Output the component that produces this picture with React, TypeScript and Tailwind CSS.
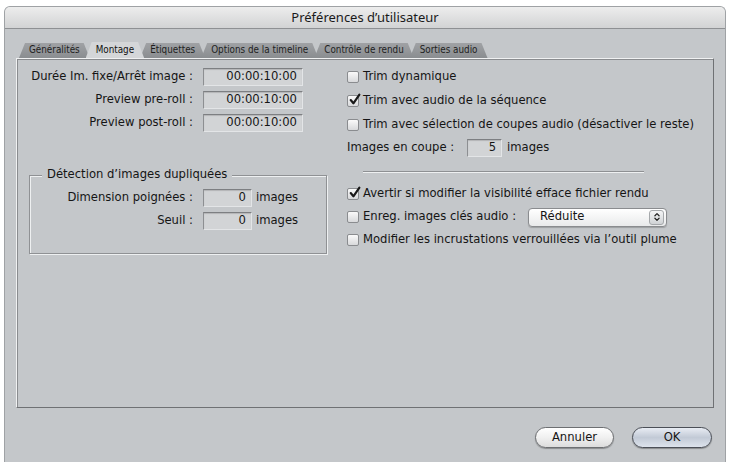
import { ChevronsUpDown } from 'lucide-react'

const font = "font-['DejaVu_Sans',_'Noto_Sans',_sans-serif]"
const txt = 'text-[11.6px] text-[#151515]'

const tabs = ['Généralités', 'Montage', 'Étiquettes', 'Options de la timeline', 'Contrôle de rendu', 'Sorties audio']

function Field({ value, w = 'w-[100px]' }: { value: string; w?: string }) {
  return (
    <div className={`${w} h-[18px] shrink-0 bg-[#d2d4d6] border border-t-[#7d7f82] border-l-[#8d8f92] border-r-[#e3e5e7] border-b-[#e3e5e7] shadow-[inset_0_1px_1px_rgba(0,0,0,0.15)] flex items-center justify-end pr-[5px] ${txt}`}>
      {value}
    </div>
  )
}

function Check({ checked }: { checked?: boolean }) {
  return (
    <div className="relative w-[12px] h-[12px] rounded-[2px] border border-[#8a8c8f] bg-gradient-to-b from-[#fafafa] to-[#d8d9db] shrink-0">
      {checked && (
        <svg viewBox="0 0 12 12" className="absolute -top-[3px] left-[0px] w-[13px] h-[13px]">
          <path d="M2.5 6.5 L5 9.5 L10.5 1.5" fill="none" stroke="#1a1a1a" strokeWidth="2" strokeLinecap="round" strokeLinejoin="round" />
        </svg>
      )}
    </div>
  )
}

function CheckRow({ label, checked }: { label: string; checked?: boolean }) {
  return (
    <div className="flex items-center gap-[4px] h-[18px]">
      <Check checked={checked} />
      <span className={txt}>{label}</span>
    </div>
  )
}

export default function App() {
  return (
    <div className={`w-[729px] h-[462px] bg-white pt-[6px] pl-[4px] pr-[3px] ${font}`}>
      <div className="h-[456px] flex flex-col bg-[#c4c7ca] rounded-t-[6px] border border-[#9fa2a5] border-b-0 overflow-hidden">
        {/* title bar */}
        <div className="h-[22px] shrink-0 bg-gradient-to-b from-[#ededed] to-[#d2d3d4] border-b border-[#8e9093] flex items-center justify-center text-[13px] text-[#1a1a1a] font-['Noto_Sans',_sans-serif]">
          Préférences d’utilisateur
        </div>

        <div className="flex-1 flex flex-col px-[11px] pt-[14px]">
          {/* tabs */}
          <div className="flex items-end h-[15px] ml-[3px] -space-x-[4px] relative z-10">
            {tabs.map((t, i) => (
              <div
                key={t}
                className={`h-[15px] px-[10px] flex items-center text-[9.8px] font-['DejaVu_Sans_Condensed',_'DejaVu_Sans',_sans-serif] font-stretch-condensed [clip-path:polygon(6px_0,calc(100%-6px)_0,100%_100%,0_100%)] ${
                  i === 1
                    ? 'bg-[#d4d6d8] text-[#111] z-10 h-[16px]'
                    : 'bg-gradient-to-b from-[#a0a2a5] to-[#8a8d90] text-[#1e1e1e]'
                }`}
              >
                {t}
              </div>
            ))}
          </div>

          {/* panel */}
          <div className="h-[350px] border border-[#f0f1f2] border-r-[#6f7174] border-b-[#6f7174] bg-[#c4c7ca] shadow-[inset_1px_1px_0_#8a8c8f] px-[11px] pt-[9px] grid grid-cols-[319px_1fr]">
            {/* left column */}
            <div className="flex flex-col">
              <div className="flex flex-col gap-[5px]">
                {[
                  ['Durée Im. fixe/Arrêt image :', '00:00:10:00'],
                  ['Preview pre-roll :', '00:00:10:00'],
                  ['Preview post-roll :', '00:00:10:00'],
                ].map(([l, v]) => (
                  <div key={l} className="flex items-center h-[18px]">
                    <span className={`w-[175px] shrink-0 whitespace-nowrap text-right pr-[10px] ${txt}`}>{l}</span>
                    <Field value={v} />
                  </div>
                ))}
              </div>

              <div className="relative mt-[43px] ml-[1px] w-[298px] h-[79px] border border-[#8f9194] shadow-[1px_1px_0_#eef0f1,inset_1px_1px_0_#eef0f1]">
                <span className={`absolute -top-[10px] left-[12px] px-[5px] bg-[#c4c7ca] whitespace-nowrap ${txt}`}>
                  Détection d’images dupliquées
                </span>
                <div className="flex flex-col gap-[5px] pt-[13px]">
                  {[
                    ['Dimension poignées :', '0'],
                    ['Seuil :', '0'],
                  ].map(([l, v]) => (
                    <div key={l} className="flex items-center h-[18px]">
                      <span className={`w-[173px] shrink-0 whitespace-nowrap text-right pr-[10px] ${txt}`}>{l}</span>
                      <Field value={v} w="w-[49px]" />
                      <span className={`ml-[4px] ${txt}`}>images</span>
                    </div>
                  ))}
                </div>
              </div>
            </div>

            {/* right column */}
            <div className="flex flex-col">
              <div className="flex flex-col gap-[6px]">
                <CheckRow label="Trim dynamique" />
                <CheckRow label="Trim avec audio de la séquence" checked />
                <CheckRow label="Trim avec sélection de coupes audio (désactiver le reste)" />
              </div>
              <div className="flex items-center h-[18px] mt-[5px]">
                <span className={`pr-[13px] ${txt}`}>Images en coupe :</span>
                <Field value="5" w="w-[35px]" />
                <span className={`ml-[5px] ${txt}`}>images</span>
              </div>
              <div className="mt-[14px] ml-[16px] w-[281px] h-[2px] border-t border-[#8e9093] border-b border-b-[#eef0f1]" />
              <div className="flex flex-col gap-[5px] mt-[12px]">
                <CheckRow label="Avertir si modifier la visibilité efface fichier rendu" checked />
                <div className="flex items-center gap-[4px] h-[18px]">
                  <Check />
                  <span className={txt}>Enreg. images clés audio :</span>
                  <div className={`ml-[8px] w-[139px] h-[19px] rounded-[4px] border border-[#8a8c8f] bg-gradient-to-b from-white to-[#e9eaeb] shadow-[0_1px_1px_rgba(0,0,0,0.2)] flex items-center justify-between pl-[11px] pr-[2px] ${txt}`}>
                    Réduite
                    <div className="w-[15px] h-[15px] rounded-[3px] bg-gradient-to-b from-[#f4f5f6] to-[#cfd2d5] border border-[#a5a8ab] flex items-center justify-center">
                      <ChevronsUpDown size={10} strokeWidth={3} className="text-[#222]" />
                    </div>
                  </div>
                </div>
                <CheckRow label="Modifier les incrustations verrouillées via l’outil plume" />
              </div>
            </div>
          </div>

          {/* buttons */}
          <div className="flex justify-end gap-[18px] pr-[2px] pt-[19px]">
            <button className={`w-[79px] h-[21px] rounded-full border border-[#6d6f72] bg-gradient-to-b from-white via-[#f0f0f0] to-[#dcdcdc] shadow-[0_1px_1px_rgba(0,0,0,0.3)] ${txt}`}>
              Annuler
            </button>
            <button className={`w-[80px] h-[21px] rounded-full border border-[#4b4f57] bg-gradient-to-b from-[#e8ecf3] via-[#c2cad6] to-[#dde3ec] shadow-[0_1px_1px_rgba(0,0,0,0.3)] ${txt}`}>
              OK
            </button>
          </div>
        </div>
      </div>
    </div>
  )
}
